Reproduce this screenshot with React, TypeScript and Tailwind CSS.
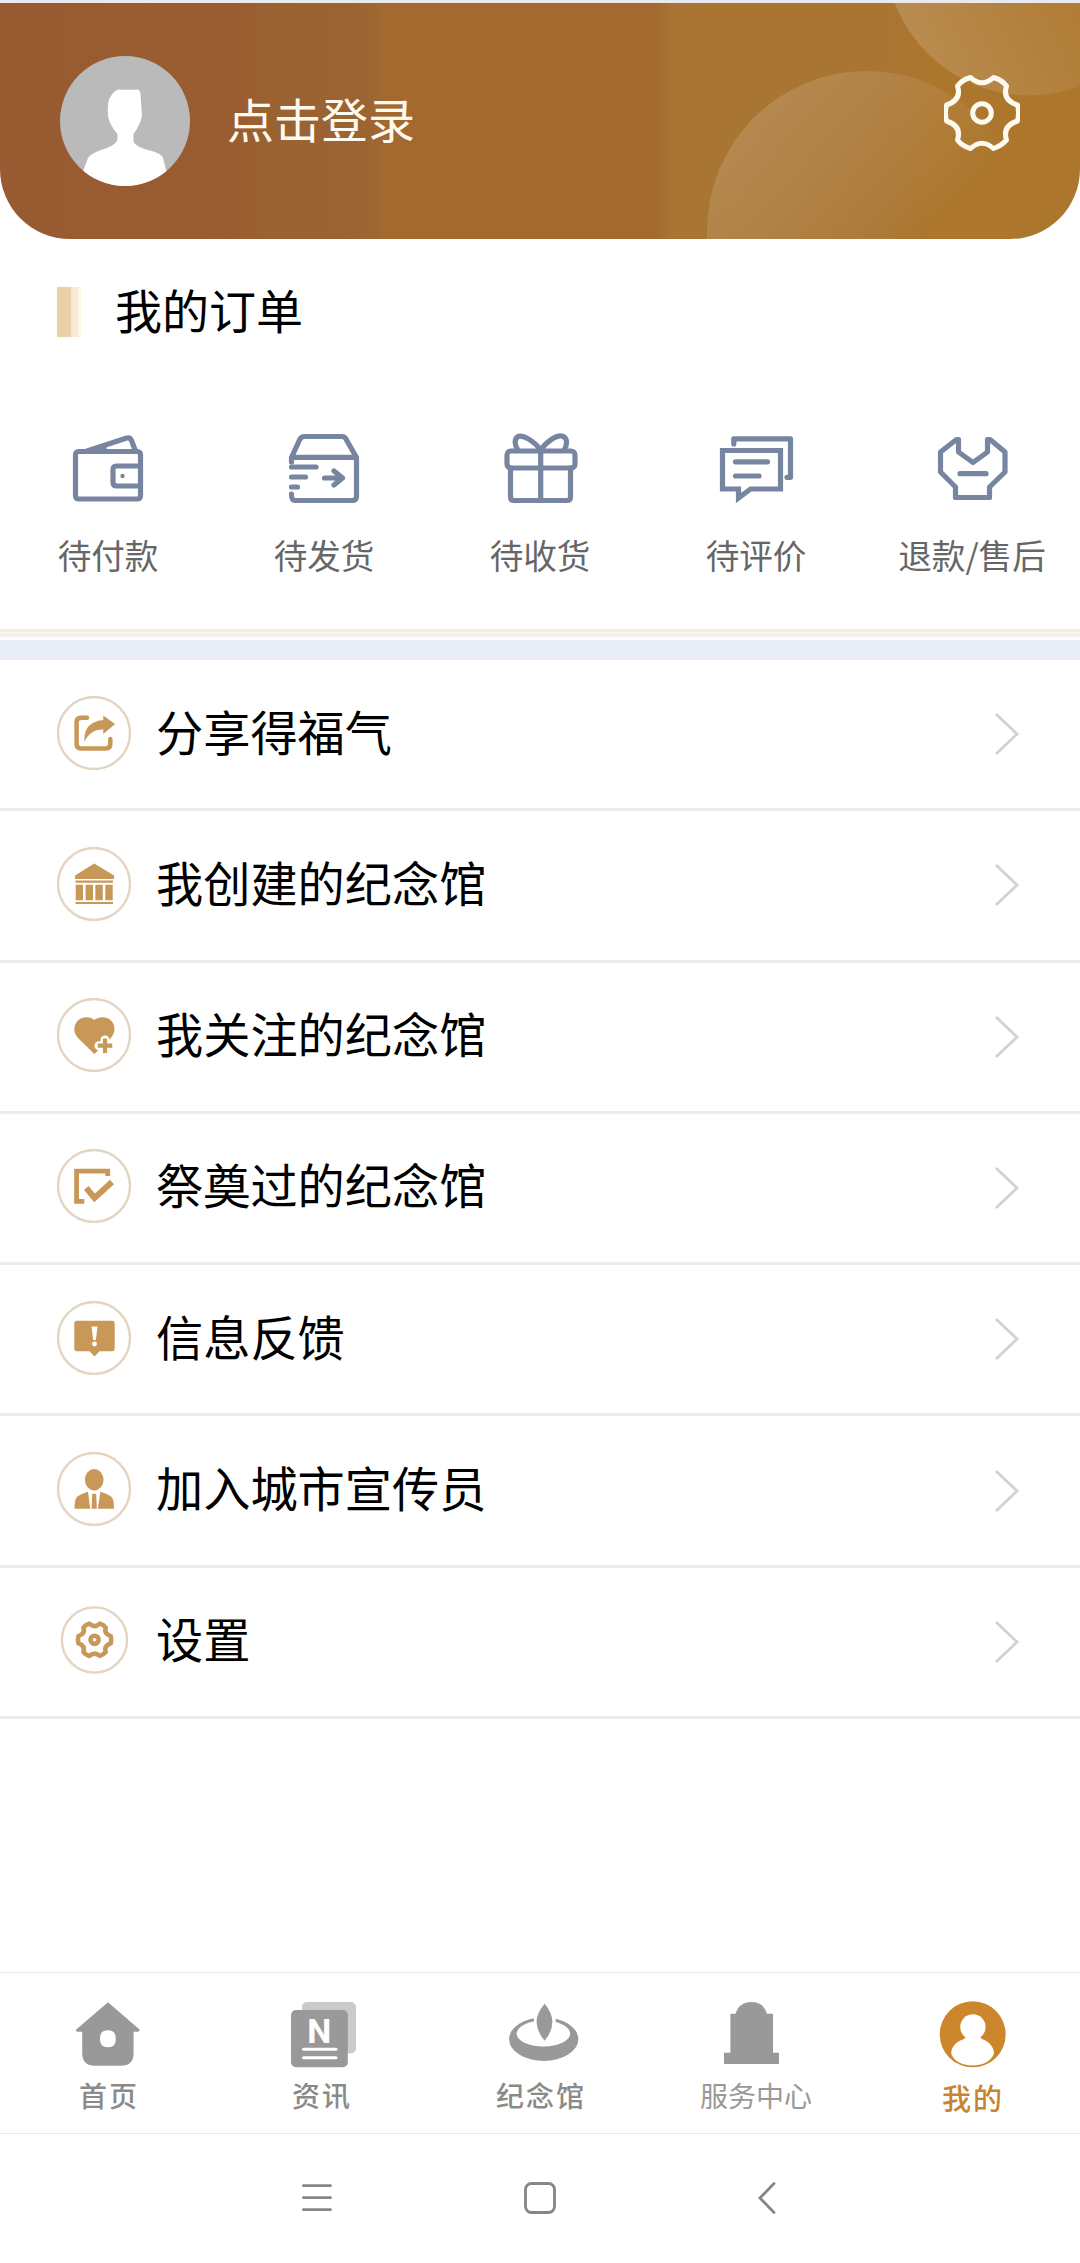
import type { ReactNode } from 'react'

const GEAR_PATH =
  'M26.5 2.5 Q38 13 49.5 2.5 Q58 5 62.5 11 Q58 25 73.5 30 Q75.5 38 73.5 46 Q58 51 62.5 65 Q57 71 49.5 73.5 Q38 63 26.5 73.5 Q18 71 13.5 65 Q18 51 2.5 46 Q.5 38 2.5 30 Q18 25 13.5 11 Q18 5 26.5 2.5Z'

const orders: { label: string; icon: ReactNode }[] = [
  {
    label: '待付款',
    icon: (
      <>
        <rect x="5.5" y="20.5" width="65" height="47.5" rx="3" />
        <path d="M17 20 L56 7.2 Q60 5.8 61.5 9.5 L65.5 20 M28 20 L34 17" />
        <path d="M70 35 H46.5 Q43 35 43 38.5 V51.5 Q43 55 46.5 55 H70" />
        <circle cx="52.5" cy="45" r="2.2" fill="#7885a0" stroke="none" />
      </>
    ),
  },
  {
    label: '待发货',
    icon: (
      <>
        <path d="M5.5 31 V26.5 L13.5 9 Q15 5.5 18.5 5.5 H56 Q59 5.5 60.5 9 L70.5 26.5 V65 Q70.5 69.5 66.5 69.5 H9 Q5.5 69.5 5.5 63" />
        <path d="M6 26.3 H70 M5.5 36 H30 M5.5 46 H19.5 M5.5 56 H11.5 M38.5 47 H56 M48 40 L56.5 47 L48 54" />
      </>
    ),
  },
  {
    label: '待收货',
    icon: (
      <>
        <rect x="5" y="20" width="68" height="17" rx="4" />
        <path d="M8.5 37 V66 Q8.5 69.5 12 69.5 H65 Q68.5 69.5 68.5 66 V37 M38.7 19 V69" />
        <path d="M38.7 19 C32 10 21 3.5 16 5.5 C11.5 8 13 15 16 19 M38.7 19 C45 10 55 3 61.5 5.5 C66 8 65 15 62 19" />
      </>
    ),
  },
  {
    label: '待评价',
    icon: (
      <>
        <path
          strokeLinejoin="miter"
          d="M4.5 19.5 H62.5 V58 H32.5 L20.5 67 V58 H4.5Z"
        />
        <path d="M15.8 13 V7.8 H72.5 V46.3 H69 M17.5 30.8 H49.5 M17.5 45 H41" />
      </>
    ),
  },
  {
    label: '退款/售后',
    icon: (
      <>
        <path d="M22.5 8.5 H24.5 V21 L39 31.5 L53.5 21 V8.5 H56 L71 21 V41 L55.5 56 V66.5 H21.5 V56 L6.5 41 V21Z" />
        <path d="M26 42.7 H52" />
      </>
    ),
  },
]

const menu: { label: string; icon: ReactNode }[] = [
  {
    label: '分享得福气',
    icon: (
      <>
        <path
          d="M30 21.7 H24 Q19.6 21.7 19.6 26 V48 Q19.6 52.4 24 52.4 H49 Q53.3 52.4 53.3 48 V43"
          fill="none"
          stroke="#c89858"
          strokeWidth="4.5"
          strokeLinecap="round"
        />
        <path d="M46.3 19.5 L58 28 L46.3 38 V33.5 Q33 33 27.5 46 Q26 26 46.3 24Z" />
      </>
    ),
  },
  {
    label: '我创建的纪念馆',
    icon: (
      <>
        <path d="M37.3 16.5 L57 28.5 V32 H18 V28.5Z" />
        <path d="M18.5 33.6 H56 V35.8 H18.5Z M18.7 37.7 H26 V53.3 H18.7Z M28.6 37.7 H36 V53.3 H28.6Z M38.4 37.7 H45.8 V53.3 H38.4Z M48.3 37.7 H55.7 V53.3 H48.3Z M18.5 54.9 H56 V57 H18.5Z" />
      </>
    ),
  },
  {
    label: '我关注的纪念馆',
    icon: (
      <>
        <path d="M37.3 22 C42 18 50 18.5 54 22.5 C59 27.5 58.5 35 53.5 40.5 L37.3 56 L21.5 40.5 C16 35 16 27.5 21 22.5 C25 18.5 33 18 37.3 22Z" />
        <path d="M48 42 V54 M42 47.7 H54" stroke="#fff" strokeWidth="9" strokeLinecap="round" />
        <path d="M48 40.5 V55 M40.7 47.7 H55.3" stroke="#c89858" strokeWidth="4.2" />
      </>
    ),
  },
  {
    label: '祭奠过的纪念馆',
    icon: (
      <>
        <path
          d="M50.7 27 V22.2 H19.6 V52.4 H27.3"
          fill="none"
          stroke="#c89858"
          strokeWidth="4.8"
        />
        <path d="M29.3 39 L37.5 49 L55 33" fill="none" stroke="#c89858" strokeWidth="6" />
      </>
    ),
  },
  {
    label: '信息反馈',
    icon: (
      <>
        <path d="M20 19.7 H55 Q57.7 19.7 57.7 22.5 V47.5 Q57.7 50.3 55 50.3 H42.5 L37.5 55.5 L32.5 50.3 H20 Q17.3 50.3 17.3 47.5 V22.5 Q17.3 19.7 20 19.7Z" />
        <path d="M34.5 25.5 H40.5 L38.8 39 H36.2Z" fill="#fff" />
        <circle cx="37.5" cy="43" r="2.4" fill="#fff" />
      </>
    ),
  },
  {
    label: '加入城市宣传员',
    icon: (
      <>
        <ellipse cx="37.2" cy="27.7" rx="9.3" ry="10.7" />
        <path d="M31 39.7 L33.2 56.8 H17.5 Q17.5 46.5 20.5 44.5 Q23 42.5 31 39.7Z M43.4 39.7 L40.8 56.8 H57 Q57 46.5 54 44.5 Q51.5 42.5 43.4 39.7Z M35.2 41.7 H39.2 L39.8 56.8 H34.6Z" />
      </>
    ),
  },
]

const tabs: { label: string; className: string; icon: ReactNode }[] = [
  {
    label: '首页',
    className: 'text-[28px] font-medium tracking-[2px] pl-[2px] text-[#8a8a8a]',
    icon: (
      <path
        fillRule="evenodd"
        d="M40 2.2 L71.5 29.5 Q72 31.8 70 31.8 H65.6 V53 Q65.6 65.8 53 65.8 H27 Q14.2 65.8 14.2 53 V31.8 H9.5 Q7.5 31.8 8.2 29.5Z M40 30.3 C34 30.3 32 33.5 32 38.8 C32 44.5 34.5 47.3 40 47.3 C45.5 47.3 47.8 44.5 47.8 38.8 C47.8 33.5 45.5 30.3 40 30.3Z"
      />
    ),
  },
  {
    label: '资讯',
    className: 'text-[28px] font-medium tracking-[2px] pr-[4px] text-[#8a8a8a]',
    icon: (
      <>
        <rect x="18" y="2" width="54" height="51.5" rx="5" fill="#cacaca" />
        <rect x="7" y="10" width="56.8" height="57.3" rx="5" />
        <text
          x="35.3"
          y="42.7"
          fill="#fff"
          textAnchor="middle"
          className="font-[Roboto,sans-serif] text-[34px] font-bold"
        >
          N
        </text>
        <path
          d="M19.5 49.3 H52 M19.5 57.7 H52"
          stroke="#fff"
          strokeWidth="3"
          strokeLinecap="round"
        />
      </>
    ),
  },
  {
    label: '纪念馆',
    className: 'text-[28px] font-medium tracking-[2px] pl-[2px] text-[#8a8a8a]',
    icon: (
      <>
        <ellipse cx="43.7" cy="39.2" rx="34.6" ry="21.8" />
        <ellipse cx="43.4" cy="33.6" rx="26.8" ry="13" fill="#fff" />
        <rect x="34" y="14" width="21.7" height="14" fill="#fff" />
        <path d="M44.7 3.7 Q60 22 44.7 40.7 Q28.5 22 44.7 3.7Z" />
      </>
    ),
  },
  {
    label: '服务中心',
    className: 'text-[28px] text-[#999]',
    icon: <path d="M8 64 V52.7 H14.4 V13.7 H19.6 Q23 2 35.5 2 Q47.5 2 51 13.7 H57 V52.7 H63 V64Z" />,
  },
  {
    label: '我的',
    className: 'text-[29px] font-medium tracking-[2px] pl-[2px] pt-[2px] text-[#c8842e]',
    icon: (
      <>
        <circle cx="40.7" cy="34.3" r="33" fill="#cc862c" />
        <circle cx="40.9" cy="27" r="12.7" fill="#fff" />
        <path
          d="M34 35 H48 Q48 38 51 39.5 C58 42 62 48 62 53.5 C60 60 52 65.5 40.7 65.5 C29 65.5 21 60 19.2 53.5 C19.2 48 23 42 31 39.5 Q34 38 34 35Z"
          fill="#fff"
        />
      </>
    ),
  },
]

function Header() {
  return (
    <header className="relative flex h-[236px] items-center justify-between overflow-hidden rounded-b-[70px] px-[60px]">
      <svg className="absolute inset-0" width="1080" height="236" viewBox="0 3 1080 236">
        <defs>
          <linearGradient id="base">
            <stop offset="0" stopColor="#985a30" />
            <stop offset=".22" stopColor="#9a5d30" />
            <stop offset=".25" stopColor="#9a6231" />
            <stop offset=".34" stopColor="#9b6431" />
            <stop offset=".355" stopColor="#a3692f" />
            <stop offset=".605" stopColor="#a3692f" />
            <stop offset=".625" stopColor="#a97534" />
            <stop offset=".82" stopColor="#aa7532" />
            <stop offset=".86" stopColor="#ac762d" />
            <stop offset="1" stopColor="#ac772d" />
          </linearGradient>
          <linearGradient id="leafLow" x1=".12" y1=".12" x2=".62" y2=".58">
            <stop offset="0" stopColor="#fff" stopOpacity=".15" />
            <stop offset=".45" stopColor="#fff" stopOpacity=".09" />
            <stop offset=".8" stopColor="#fff" stopOpacity=".04" />
            <stop offset="1" stopColor="#fff" stopOpacity="0" />
          </linearGradient>
          <linearGradient id="leafHigh" x1=".05" y1=".75" x2=".85" y2=".4">
            <stop offset="0" stopColor="#fff" stopOpacity=".16" />
            <stop offset=".5" stopColor="#fff" stopOpacity=".07" />
            <stop offset="1" stopColor="#fff" stopOpacity="0" />
          </linearGradient>
        </defs>
        <rect y="3" width="1080" height="236" fill="url(#base)" />
        <circle cx="867" cy="231" r="160" fill="url(#leafLow)" />
        <circle cx="1029" cy="-48" r="143.5" fill="url(#leafHigh)" />
      </svg>
      <div className="relative flex items-center gap-[37px]">
        <svg className="rounded-full" width="130" height="130" viewBox="0 0 130 130">
          <rect width="130" height="130" fill="#bababa" />
          <path
            d="M59 33.5 Q69 34 77 33.5 Q80 33.5 80.5 38 L82 60 Q80 69 73.5 78 V86 Q76 91 90 94.5 Q101 97 103 102 L107 118 V130 H22 V118 L28 102 Q30 98 41 94 Q55 90 57.5 84 V78 Q49.5 69 48 60 Q47 44 51 40 Q54 34.5 59 33.5Z"
            fill="#fff"
          />
        </svg>
        <span className="mb-[7px] text-[47px] leading-[60px] text-[#fffaf0]">点击登录</span>
      </div>
      <svg
        className="relative mb-[16px]"
        width="76"
        height="76"
        viewBox="0 0 76 76"
        fill="none"
        stroke="#fffaf0"
        strokeWidth="5"
        strokeLinejoin="round"
      >
        <path d={GEAR_PATH} />
        <circle cx="38" cy="38" r="9.3" />
      </svg>
    </header>
  )
}

function Orders() {
  return (
    <section className="h-[390px] pt-[43px]">
      <div className="flex h-[60px] items-center gap-[34px] pl-[57px]">
        <div className="flex h-[50px]">
          <span className="w-[14px] bg-[#e9d0a6]" />
          <span className="w-[7px] bg-[#f6ead6]" />
          <span className="w-[3px] bg-[#fef7e8]" />
        </div>
        <h2 className="mb-[6px] text-[47px] leading-[60px] text-black">我的订单</h2>
      </div>
      <div className="grid grid-cols-5 pt-[89px]">
        {orders.map(({ label, icon }) => (
          <div key={label} className="flex flex-col items-center gap-[26px]">
            <svg
              width="76"
              height="76"
              viewBox="0 0 76 76"
              fill="none"
              stroke="#7885a0"
              strokeWidth="5.2"
              strokeLinecap="round"
              strokeLinejoin="round"
            >
              {icon}
            </svg>
            <span className="text-[33.6px] leading-[44px] whitespace-nowrap text-[#666]">{label}</span>
          </div>
        ))}
      </div>
    </section>
  )
}

function Divider() {
  return (
    <div className="flex h-[31px] flex-col">
      <div className="h-[3px] bg-[#f3ebe6]" />
      <div className="h-[2px] bg-[#fbf6e4]" />
      <div className="h-[2px] bg-[#e9ecf2]" />
      <div className="h-[2px] bg-[#fbf8ec]" />
      <div className="h-[2px] bg-white" />
      <div className="h-[20px] bg-[#e8ecf5]" />
    </div>
  )
}

function MenuRow({ label, children }: { label: string; children: ReactNode }) {
  return (
    <li className="flex items-center border-b-3 border-[#f0ebe8] pr-[60px] pb-[3px] pl-[57px]">
      {children}
      <span className="mb-[4px] ml-[25px] flex-1 text-[47.2px] leading-[60px] text-black">{label}</span>
      <svg
        className="mt-[3px]"
        width="26"
        height="44"
        viewBox="0 0 26 44"
        fill="none"
        stroke="#d2d2d2"
        strokeWidth="2.8"
      >
        <path d="M2 2 L23 22 L2 42" />
      </svg>
    </li>
  )
}

function Menu() {
  return (
    <ul className="grid h-[1059px] grid-rows-7">
      {menu.map(({ label, icon }) => (
        <MenuRow key={label} label={label}>
          <svg width="74" height="74" viewBox="0 0 74 74" fill="#c89858">
            <circle cx="37" cy="37" r="36" fill="none" stroke="#e3d5c1" strokeWidth="2.4" />
            {icon}
          </svg>
        </MenuRow>
      ))}
      <MenuRow label="设置">
        <svg width="74" height="74" viewBox="0 0 74 74" fill="none">
          <circle cx="37.5" cy="37" r="32.6" stroke="#e3d5c1" strokeWidth="2.4" />
          <g transform="translate(20.3 19.5) scale(.455)" stroke="#c89858" strokeWidth="10">
            <path d={GEAR_PATH} strokeLinejoin="round" />
            <circle cx="38" cy="38" r="9" />
          </g>
        </svg>
      </MenuRow>
    </ul>
  )
}

function TabBar() {
  return (
    <nav className="grid h-[162px] grid-cols-5 border-y border-[#ece9e7] pt-[27px]">
      {tabs.map(({ label, className, icon }) => (
        <a key={label} className="flex flex-col items-center gap-[5px]">
          <svg width="80" height="70" viewBox="0 0 80 70" fill="#999">
            {icon}
          </svg>
          <span className={`leading-[40px] ${className}`}>{label}</span>
        </a>
      ))}
    </nav>
  )
}

function SystemBar() {
  return (
    <div className="flex h-[129px] pt-[48px] pl-[301px]">
      <svg
        width="476"
        height="32"
        viewBox="0 0 476 32"
        fill="none"
        stroke="#868686"
        strokeWidth="2.8"
        strokeLinecap="round"
      >
        <path d="M2.5 3.7 H29.5 M2.5 15.7 H29.5 M2.5 27.7 H29.5" />
        <rect x="224.5" y="1.5" width="29" height="29" rx="6" />
        <path d="M473 1.5 L459 16 L473 30.5" />
      </svg>
    </div>
  )
}

export default function App() {
  return (
    <div className="flex h-[2263px] w-[1080px] flex-col overflow-hidden bg-white font-['Noto_Sans_CJK_SC',sans-serif]">
      <div className="h-[3px] shrink-0 bg-[#eaeaee]" />
      <Header />
      <Orders />
      <Divider />
      <Menu />
      <div className="flex-1" />
      <TabBar />
      <SystemBar />
    </div>
  )
}
